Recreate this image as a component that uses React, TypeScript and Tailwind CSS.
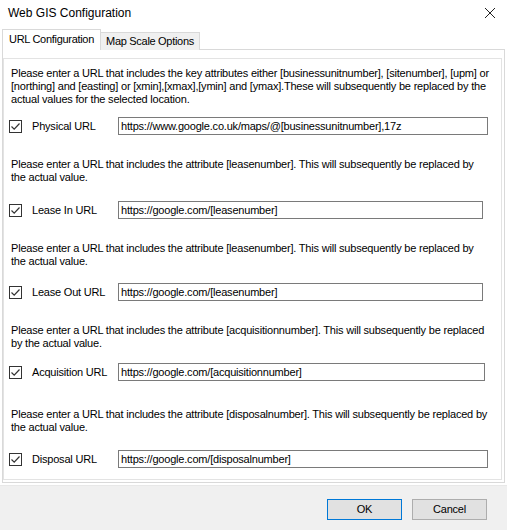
import React from 'react'

type Entry = {
  label: string
  value: string
  lines: string[]
  inputWidth: string
  textTop: string
  rowTop: string
}

const entries: Entry[] = [
  {
    label: 'Physical URL',
    value: 'https://www.google.co.uk/maps/@[businessunitnumber],17z',
    lines: [
      'Please enter a URL that includes the key attributes either [businessunitnumber], [sitenumber], [upm] or',
      '[northing] and [easting] or [xmin],[xmax],[ymin] and [ymax].These will subsequently be replaced by the',
      'actual values for the selected location.',
    ],
    inputWidth: 'w-[370px]',
    textTop: 'mt-[8px]',
    rowTop: 'mt-[11px]',
  },
  {
    label: 'Lease In URL',
    value: 'https://google.com/[leasenumber]',
    lines: [
      'Please enter a URL that includes the attribute [leasenumber]. This will subsequently be replaced by',
      'the actual value.',
    ],
    inputWidth: 'w-[365px]',
    textTop: 'mt-[23px]',
    rowTop: 'mt-[17px]',
  },
  {
    label: 'Lease Out URL',
    value: 'https://google.com/[leasenumber]',
    lines: [
      'Please enter a URL that includes the attribute [leasenumber]. This will subsequently be replaced by',
      'the actual value.',
    ],
    inputWidth: 'w-[365px]',
    textTop: 'mt-[23px]',
    rowTop: 'mt-[15px]',
  },
  {
    label: 'Acquisition URL',
    value: 'https://google.com/[acquisitionnumber]',
    lines: [
      'Please enter a URL that includes the attribute [acquisitionnumber]. This will subsequently be replaced',
      'by the actual value.',
    ],
    inputWidth: 'w-[367px]',
    textTop: 'mt-[23px]',
    rowTop: 'mt-[13px]',
  },
  {
    label: 'Disposal URL',
    value: 'https://google.com/[disposalnumber]',
    lines: [
      'Please enter a URL that includes the attribute [disposalnumber]. This will subsequently be replaced by',
      'the actual value.',
    ],
    inputWidth: 'w-[370px]',
    textTop: 'mt-[27px]',
    rowTop: 'mt-[16px]',
  },
]

function CheckBox() {
  return (
    <span className="flex h-[13px] w-[13px] shrink-0 items-center justify-center border border-[#333333] bg-white">
      <svg width="11" height="11" viewBox="0 0 11 11">
        <path d="M1.5 5.5 L4.2 8.2 L9.5 2.5" fill="none" stroke="#333333" strokeWidth="1.2" />
      </svg>
    </span>
  )
}

function UrlSection({ entry }: { entry: Entry }) {
  return (
    <div>
      <div className={`${entry.textTop} pl-[7px] leading-[13px]`}>
        {entry.lines.map((line) => (
          <div key={line} className="whitespace-nowrap">
            {line}
          </div>
        ))}
      </div>
      <div className={`${entry.rowTop} flex h-[18px] items-center pl-[5px]`}>
        <CheckBox />
        <span className="ml-[10px] w-[86px] shrink-0 whitespace-nowrap">{entry.label}</span>
        <div
          className={`${entry.inputWidth} flex h-[18px] items-center border border-[#7a7a7a] bg-white pl-[2px] whitespace-nowrap`}
        >
          {entry.value}
        </div>
      </div>
    </div>
  )
}

export default function App() {
  return (
    <div className="flex h-[530px] w-[507px] flex-col bg-white font-['Liberation_Sans',Arial,sans-serif] text-[11px] tracking-[-0.2px] text-black">
      {/* Title bar */}
      <div className="flex h-[29px] shrink-0 items-center justify-between pb-[3px] pl-[8px] pr-[11px]">
        <span className="text-[12px] tracking-normal">Web GIS Configuration</span>
        <svg width="12" height="12" viewBox="0 0 12 12">
          <path d="M1 1 L11 11 M11 1 L1 11" stroke="#222222" strokeWidth="1" />
        </svg>
      </div>

      {/* Tabs */}
      <div className="relative z-10 flex h-[21px] shrink-0 items-end pl-[2px]">
        <div className="flex h-[21px] w-[99px] items-center justify-center border border-b-0 border-[#d9d9d9] bg-white pb-[1px] tracking-[-0.3px]">
          URL Configuration
        </div>
        <div className="flex h-[18px] w-[99px] items-center justify-center border border-b-0 border-l-0 border-[#d9d9d9] bg-[#f0f0f0] tracking-[-0.3px]">
          Map Scale Options
        </div>
      </div>

      {/* Tab page */}
      <div className="-mt-px mx-[2px] flex h-[434px] shrink-0 flex-col border border-[#d9d9d9] bg-white">
        <div className="mb-[2px] mr-[2px] mt-[8px] flex-1 border border-[#e3e3e3]">
          {entries.map((entry) => (
            <UrlSection key={entry.label} entry={entry} />
          ))}
        </div>
      </div>

      {/* Footer */}
      <div className="mt-[2px] flex flex-1 justify-end gap-[10px] border-t border-[#e8e8e8] bg-[#f0f0f0] pr-[20px] pt-[13px]">
        <button className="h-[21px] w-[75px] border border-[#0078d7] bg-[#e1e1e1] text-[11px]">OK</button>
        <button className="h-[21px] w-[75px] border border-[#adadad] bg-[#e1e1e1] text-[11px]">Cancel</button>
      </div>
    </div>
  )
}
